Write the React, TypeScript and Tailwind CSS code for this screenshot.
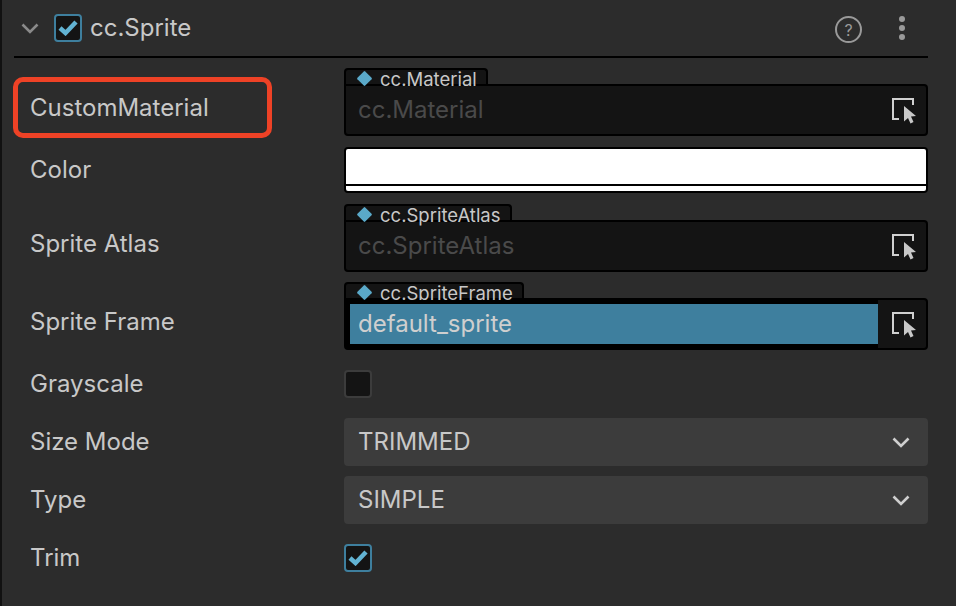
import type { ReactNode } from "react";

const font = { fontFamily: '"Inter", "Liberation Sans", sans-serif' };

function Check({ className }: { className: string }) {
  return (
    <div className={`flex h-[28px] w-[28px] items-center justify-center rounded-[4px] border-2 border-[#3e7f9e] bg-[#141414] ${className}`}>
      <svg width="20" height="16" viewBox="0 0 20 16" fill="none">
        <path d="M2 8 L7.5 13 L18 2" stroke="#62b3d3" strokeWidth="4.5" />
      </svg>
    </div>
  );
}

function PickIcon() {
  return (
    <svg width="26" height="26" viewBox="0 0 26 26" fill="none" className="shrink-0">
      <path d="M7 21 H1 V1 H21 V7" stroke="#d0d0d0" strokeWidth="2" />
      <path d="M12 8 L24 18 L19 18.5 L21.5 24 L18.5 25.5 L16 20 L12 23.5 Z" fill="#c8c8c8" />
    </svg>
  );
}

function Label({ children, nudge = "" }: { children: ReactNode; nudge?: string }) {
  return <div className={`w-[314px] shrink-0 text-[#c8c8c8] ${nudge}`}>{children}</div>;
}

function AssetField({ type, tabWidth, value, active }: { type: string; tabWidth: string; value: string; active?: boolean }) {
  return (
    <div className="flex-1">
      <div className={`flex h-[17px] items-center rounded-t-[4px] border-x-2 border-t-2 border-black bg-[#141414] pt-[4px] pl-[13px] ${tabWidth}`}>
        <span className="mb-[3px] h-[11px] w-[11px] shrink-0 rotate-45 rounded-[1px] bg-[#5aa9c9]" />
        <span className="ml-[10px] text-[18.5px] leading-none whitespace-nowrap text-[#c8c8c8]">{type}</span>
      </div>
      <div className="-mt-px flex h-[52px] items-center rounded-[4px] rounded-tl-none border-2 border-black bg-[#141414]">
        {active ? (
          // the black band round the blue value covers the tab label's descender
          <div className="relative flex-1 border-y-4 border-l-4 border-black">
            <div className="flex h-[40px] items-center bg-[#3e7f9e] pl-[8px] text-[#cfcfcf]">{value}</div>
          </div>
        ) : (
          <div className="flex h-[40px] flex-1 items-center pl-[12px] text-[#4a4a4a]">{value}</div>
        )}
        <div className="mt-[2px] mr-[8px] ml-[14px]">
          <PickIcon />
        </div>
      </div>
    </div>
  );
}

function SelectBox({ value }: { value: string }) {
  return (
    <div className="flex h-[48px] flex-1 items-center justify-between rounded-[4px] bg-[#3c3c3c] pr-[18px] pl-[14px] text-[#c8c8c8]">
      {value}
      <svg width="18" height="11" viewBox="0 0 18 11" fill="none">
        <path d="M1.5 1.5 L9 9 L16.5 1.5" stroke="#cfcfcf" strokeWidth="2.6" />
      </svg>
    </div>
  );
}

export default function App() {
  return (
    <div className="h-[606px] w-[956px] overflow-hidden border-l-2 border-[#111] bg-[#2c2c2c] text-[24px] leading-none" style={font}>
      <div className="mr-[28px] ml-[12px]">
        {/* component header */}
        <div className="flex h-[58px] items-center border-b-2 border-black">
          <svg width="18" height="11" viewBox="0 0 18 11" fill="none" className="ml-[7px]">
            <path d="M1.5 1.5 L9 9 L16.5 1.5" stroke="#8a8a8a" strokeWidth="2.6" />
          </svg>
          <Check className="ml-[15px]" />
          <span className="ml-[8px] text-[#c8c8c8]">cc.Sprite</span>
          <div className="ml-auto flex items-center">
            <div className="mt-[3px] flex h-[27px] w-[27px] items-center justify-center rounded-full border-2 border-[#9a9a9a] text-[16px] text-[#9a9a9a]">?</div>
            <div className="mr-[23px] ml-[37px] flex flex-col gap-[3px]">
              <span className="h-[6px] w-[6px] rounded-full bg-[#9a9a9a]" />
              <span className="h-[6px] w-[6px] rounded-full bg-[#9a9a9a]" />
              <span className="h-[6px] w-[6px] rounded-full bg-[#9a9a9a]" />
            </div>
          </div>
        </div>

        <div className="pl-[16px]">
          <div className="mt-[10px] flex items-end">
            <Label nudge="relative mb-[16px]">
              CustomMaterial
              {/* red annotation around the label */}
              <div className="absolute top-[-19px] left-[-17px] h-[61px] w-[259px] rounded-[10px] border-[5px] border-[#ee4226]" />
            </Label>
            <AssetField type="cc.Material" tabWidth="w-[144px]" value="cc.Material" />
          </div>

          <div className="mt-[11px] flex items-center">
            <Label>Color</Label>
            <div className="h-[46px] flex-1 rounded-[4px] border-2 border-black bg-white">
              <div className="mt-[35px] h-[2px] bg-black" />
            </div>
          </div>

          <div className="mt-[11px] flex items-end">
            <Label nudge="mb-[16px]">Sprite Atlas</Label>
            <AssetField type="cc.SpriteAtlas" tabWidth="w-[168px]" value="cc.SpriteAtlas" />
          </div>

          <div className="mt-[10px] flex items-end">
            <Label nudge="mb-[16px]">Sprite Frame</Label>
            <AssetField type="cc.SpriteFrame" tabWidth="w-[180px]" value="default_sprite" active />
          </div>

          <div className="mt-[20px] flex items-center">
            <Label>Grayscale</Label>
            <div className="h-[28px] w-[28px] rounded-[4px] border-2 border-[#3c3c3c] bg-[#141414]" />
          </div>

          <div className="mt-[20px] flex items-center">
            <Label>Size Mode</Label>
            <SelectBox value="TRIMMED" />
          </div>

          <div className="mt-[10px] flex items-center">
            <Label>Type</Label>
            <SelectBox value="SIMPLE" />
          </div>

          <div className="mt-[20px] flex items-center">
            <Label>Trim</Label>
            <Check className="" />
          </div>
        </div>
      </div>
    </div>
  );
}
